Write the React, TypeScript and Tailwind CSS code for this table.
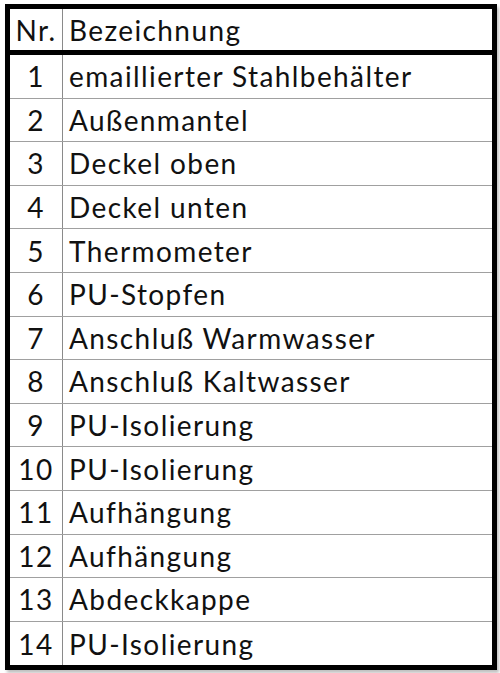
import React from 'react';

const rows: [number, string][] = [
  [1, 'emaillierter Stahlbehälter'],
  [2, 'Außenmantel'],
  [3, 'Deckel oben'],
  [4, 'Deckel unten'],
  [5, 'Thermometer'],
  [6, 'PU-Stopfen'],
  [7, 'Anschluß Warmwasser'],
  [8, 'Anschluß Kaltwasser'],
  [9, 'PU-Isolierung'],
  [10, 'PU-Isolierung'],
  [11, 'Aufhängung'],
  [12, 'Aufhängung'],
  [13, 'Abdeckkappe'],
  [14, 'PU-Isolierung'],
];

export default function App() {
  return (
    <div className="h-[673px] w-[500px] bg-white pl-[5px] pt-[4px] font-['Lato',sans-serif] text-[28px] leading-none tracking-[1.4px] text-[#111]">
      <div className="w-[492px] border-[5px] border-black shadow-[2px_3px_3px_rgba(0,0,0,0.25)]">
        {/* Kopfzeile */}
        <div className="flex h-[46px] items-center border-b-[5px] border-black">
          <div className="flex h-full w-[53px] items-center justify-center border-r border-[#8a8a8a]">Nr.</div>
          <div className="pl-[6px]">Bezeichnung</div>
        </div>
        {rows.map(([nr, name], i) => (
          <div
            key={nr}
            className={`flex h-[43.6px] items-center ${i < rows.length - 1 ? 'border-b border-[#a0a0a0]' : ''}`}
          >
            <div className="flex h-full w-[53px] items-center justify-center border-r border-[#8a8a8a]">{nr}</div>
            <div className="pl-[6px]">{name}</div>
          </div>
        ))}
      </div>
    </div>
  );
}
